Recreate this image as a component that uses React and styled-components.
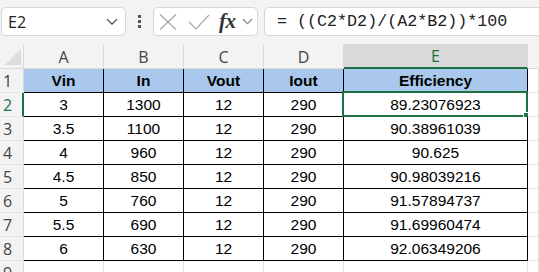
import React from 'react';
import styled, { createGlobalStyle } from 'styled-components';

const Global = createGlobalStyle`
  html, body { margin: 0; padding: 0; background: #fff; }
  body { width: 539px; height: 272px; overflow: hidden; font-family: "Liberation Sans", Arial, sans-serif; }
`;

const green = '#1e7145';

const Toolbar = styled.div`
  height: 44px;
  background: #f3f3f3;
  display: flex;
  align-items: flex-start;
  padding-top: 7px;
  box-sizing: border-box;
  padding-left: 1px;
`;

const NameBox = styled.div`
  width: 125px;
  height: 29px;
  box-sizing: border-box;
  background: #fff;
  border: 1px solid #d6d6d6;
  border-radius: 5px;
  display: flex;
  align-items: center;
  justify-content: space-between;
  padding: 0 7px 0 6px;
  font-family: "Open Sans", sans-serif;
  font-size: 16px;
  color: #222;
`;

const Dots = styled.div`
  width: 27px;
  height: 29px;
  display: flex;
  flex-direction: column;
  align-items: center;
  justify-content: center;
  gap: 2px;
  & span { width: 3px; height: 3px; background: #555; }
`;

const FxBox = styled.div`
  width: 105px;
  height: 29px;
  box-sizing: border-box;
  background: #fff;
  border: 1px solid #d6d6d6;
  border-radius: 5px;
  display: flex;
  align-items: center;
  padding-left: 5px;
`;

const Fx = styled.span`
  font-family: "Liberation Serif", serif;
  font-style: italic;
  font-weight: bold;
  font-size: 21px;
  color: #333;
  margin-left: 9px;
  letter-spacing: -0.5px;
`;

const FormulaBox = styled.div`
  flex: 1;
  margin-left: 6px;
  height: 29px;
  box-sizing: border-box;
  background: #fff;
  border: 1px solid #d6d6d6;
  border-right: none;
  border-radius: 5px 0 0 5px;
  display: flex;
  align-items: center;
  padding-left: 12px;
  font-family: "Liberation Mono", monospace;
  font-size: 16.7px;
  color: #222;
  white-space: pre;
`;

const Sheet = styled.div`
  display: grid;
  grid-template-columns: 24px 80px 80px 80px 80px 184px 1fr;
  grid-template-rows: 25px;
  grid-auto-rows: 24px;
`;

const Corner = styled.div`
  background: #f3f3f3;
  border-right: 1px solid #dadada;
  border-bottom: 1px solid #dadada;
  display: flex;
  align-items: flex-end;
  justify-content: flex-end;
  padding: 0 2px 3px 0;
`;

const ColHead = styled.div`
  background: ${p => (p.$active ? '#d9d9d9' : '#f3f3f3')};
  border-right: 1px solid ${p => (p.$last ? 'transparent' : '#dadada')};
  border-bottom: ${p => (p.$active ? `2px solid ${green}` : '1px solid #dadada')};
  color: ${p => (p.$active ? green : '#444')};
  font-family: "Open Sans", sans-serif;
  font-size: 16px;
  display: flex;
  align-items: center;
  justify-content: center;
  padding-top: 1px;
`;

const RowHead = styled.div`
  background: #f3f3f3;
  border-right: ${p => (p.$active ? `2px solid ${green}` : '1px solid #dadada')};
  border-bottom: 1px solid #e3e3e3;
  color: ${p => (p.$active ? green : '#444')};
  font-family: "Open Sans", sans-serif;
  font-size: 16px;
  display: flex;
  align-items: center;
  padding-left: 3px;
`;

const Cell = styled.div`
  position: relative;
  background: ${p => (p.$head ? '#a9c8eb' : '#fff')};
  border-right: 1px solid ${p => (p.$table ? '#000' : '#e1e1e1')};
  border-bottom: 1px solid ${p => (p.$table ? '#000' : '#e1e1e1')};
  font-family: "Liberation Sans", Arial, sans-serif;
  font-size: 15.5px;
  font-weight: ${p => (p.$head ? 'bold' : 'normal')};
  color: #000;
  display: flex;
  align-items: center;
  justify-content: center;
  padding-top: 1px;
`;

const Selection = styled.div`
  position: absolute;
  top: -2px;
  left: -2px;
  right: -1px;
  bottom: -1px;
  border: 2px solid ${green};
  pointer-events: none;
  &::after {
    content: '';
    position: absolute;
    right: -4px;
    bottom: -4px;
    width: 5px;
    height: 5px;
    background: ${green};
    border: 1px solid #fff;
  }
`;

const cols = ['A', 'B', 'C', 'D', 'E'];
const head = ['Vin', 'In', 'Vout', 'Iout', 'Efficiency'];
const rows = [
  ['3', '1300', '12', '290', '89.23076923'],
  ['3.5', '1100', '12', '290', '90.38961039'],
  ['4', '960', '12', '290', '90.625'],
  ['4.5', '850', '12', '290', '90.98039216'],
  ['5', '760', '12', '290', '91.57894737'],
  ['5.5', '690', '12', '290', '91.69960474'],
  ['6', '630', '12', '290', '92.06349206'],
];

const Chevron = ({ size = 12, color = '#444' }) => (
  <svg width={size} height={size * 0.6} viewBox="0 0 12 7" fill="none">
    <path d="M1 1 L6 6 L11 1" stroke={color} strokeWidth="1.3" />
  </svg>
);

function App() {
  return (
    <>
      <Global />
      <Toolbar>
        <NameBox>
          E2
          <Chevron />
        </NameBox>
        <Dots><span /><span /><span /></Dots>
        <FxBox>
          <svg width="18" height="16" viewBox="0 0 18 16" fill="none">
            <path d="M1 0.5 L17 15.5 M17 0.5 L1 15.5" stroke="#a8a8a8" strokeWidth="1.2" />
          </svg>
          <svg width="22" height="16" viewBox="0 0 22 16" fill="none" style={{ marginLeft: 11 }}>
            <path d="M1 8 L8 15 L21 1" stroke="#a8a8a8" strokeWidth="1.2" />
          </svg>
          <Fx>fx</Fx>
          <span style={{ marginLeft: 6, display: 'flex' }}><Chevron size={11} color="#888" /></span>
        </FxBox>
        <FormulaBox>= ((C2*D2)/(A2*B2))*100</FormulaBox>
      </Toolbar>
      <Sheet>
        <Corner>
          <svg width="16" height="16" viewBox="0 0 16 16">
            <path d="M16 0 L16 16 L0 16 Z" fill="#dcdcdc" />
          </svg>
        </Corner>
        {cols.map(c => (
          <ColHead key={c} $active={c === 'E'}>{c}</ColHead>
        ))}
        <ColHead $last />

        <RowHead>1</RowHead>
        {head.map(h => (
          <Cell key={h} $table $head>{h}</Cell>
        ))}
        <Cell />

        {rows.map((r, i) => (
          <React.Fragment key={i}>
            <RowHead $active={i === 0}>{i + 2}</RowHead>
            {r.map((v, j) => (
              <Cell key={j} $table>
                {v}
                {i === 0 && j === 4 && <Selection />}
              </Cell>
            ))}
            <Cell />
          </React.Fragment>
        ))}

        <RowHead>9</RowHead>
        {cols.map(c => <Cell key={c} />)}
        <Cell />
      </Sheet>
    </>
  );
}

export default App;
